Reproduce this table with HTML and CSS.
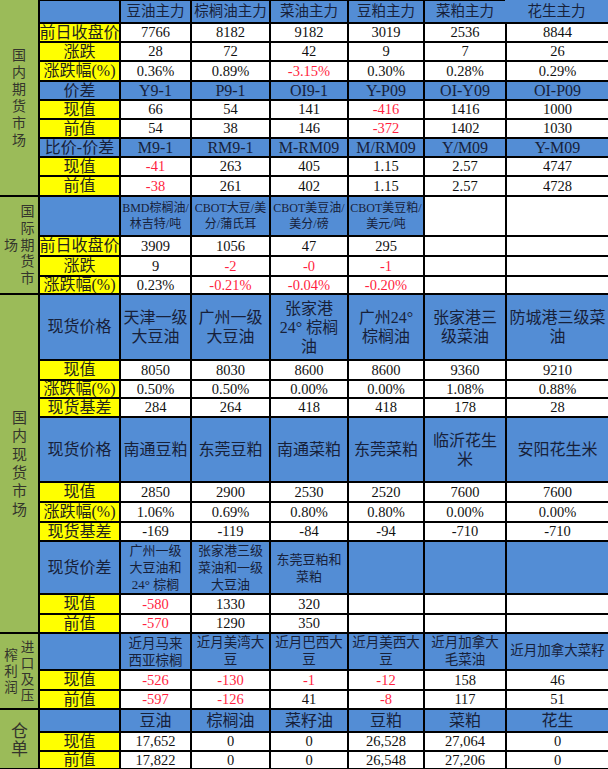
FILE: index.html
```html
<!DOCTYPE html>
<html lang="zh-CN">
<head>
<meta charset="utf-8">
<title>油脂油料市场数据</title>
<link rel="stylesheet" href="styles.css">
</head>
<body>
<div class="sheet">
  <!-- section labels (green column) -->
  <div class="g sec1"><span class="vt vt1">国内期货市场</span></div>
  <div class="g sec2"><span class="vt vt2">国际期货市<br>场</span></div>
  <div class="g sec3"><span class="vt vt3">国内现货市场</span></div>
  <div class="g sec4"><span class="vt vt4">进口及压<br>榨利润</span></div>
  <div class="g sec5"><span class="vt vt5">仓单</span></div>

  <!-- 国内期货市场 -->
  <div class="c b topline"></div>
  <div class="c b h14 topline">豆油主力</div>
  <div class="c b h14 topline">棕榈油主力</div>
  <div class="c b h14 topline">菜油主力</div>
  <div class="c b h14 topline">豆粕主力</div>
  <div class="c b h14 topline">菜粕主力</div>
  <div class="c b h14 joinleft">花生主力</div>

  <div class="c y">前日收盘价</div>
  <div class="c w">7766</div><div class="c w">8182</div><div class="c w">9182</div><div class="c w">3019</div><div class="c w">2536</div><div class="c w">8844</div>

  <div class="c y">涨跌</div>
  <div class="c w">28</div><div class="c w">72</div><div class="c w">42</div><div class="c w">9</div><div class="c w">7</div><div class="c w">26</div>

  <div class="c y">涨跌幅(%)</div>
  <div class="c w">0.36%</div><div class="c w">0.89%</div><div class="c w neg">-3.15%</div><div class="c w">0.30%</div><div class="c w">0.28%</div><div class="c w">0.29%</div>

  <div class="c b lab">价差</div>
  <div class="c b v16">Y9-1</div><div class="c b v16">P9-1</div><div class="c b v16">OI9-1</div><div class="c b v16">Y-P09</div><div class="c b v16">OI-Y09</div><div class="c b v16">OI-P09</div>

  <div class="c y">现值</div>
  <div class="c w">66</div><div class="c w">54</div><div class="c w">141</div><div class="c w neg">-416</div><div class="c w">1416</div><div class="c w">1000</div>

  <div class="c y">前值</div>
  <div class="c w">54</div><div class="c w">38</div><div class="c w">146</div><div class="c w neg">-372</div><div class="c w">1402</div><div class="c w">1030</div>

  <div class="c b lab">比价-价差</div>
  <div class="c b v16">M9-1</div><div class="c b v16">RM9-1</div><div class="c b v16">M-RM09</div><div class="c b v16">M/RM09</div><div class="c b v16">Y/M09</div><div class="c b v16">Y-M09</div>

  <div class="c y">现值</div>
  <div class="c w neg">-41</div><div class="c w">263</div><div class="c w">405</div><div class="c w">1.15</div><div class="c w">2.57</div><div class="c w">4747</div>

  <div class="c y">前值</div>
  <div class="c w neg">-38</div><div class="c w">261</div><div class="c w">402</div><div class="c w">1.15</div><div class="c w">2.57</div><div class="c w">4728</div>

  <!-- 国际期货市场 -->
  <div class="c b"></div>
  <div class="c b s12">BMD棕榈油/<br>林吉特/吨</div>
  <div class="c b s12">CBOT大豆/美<br>分/蒲氏耳</div>
  <div class="c b s12">CBOT美豆油/<br>美分/磅</div>
  <div class="c b s12">CBOT美豆粕/<br>美元/吨</div>
  <div class="c w"></div>
  <div class="c w"></div>

  <div class="c y">前日收盘价</div>
  <div class="c w">3909</div><div class="c w">1056</div><div class="c w">47</div><div class="c w">295</div><div class="c w"></div><div class="c w"></div>

  <div class="c y">涨跌</div>
  <div class="c w">9</div><div class="c w neg">-2</div><div class="c w neg">-0</div><div class="c w neg">-1</div><div class="c w"></div><div class="c w"></div>

  <div class="c y">涨跌幅(%)</div>
  <div class="c w">0.23%</div><div class="c w neg">-0.21%</div><div class="c w neg">-0.04%</div><div class="c w neg">-0.20%</div><div class="c w"></div><div class="c w"></div>

  <!-- 国内现货市场 -->
  <div class="c b lab">现货价格</div>
  <div class="c b h16">天津一级<br>大豆油</div>
  <div class="c b h16">广州一级<br>大豆油</div>
  <div class="c b h16">张家港<br>24° 棕榈<br>油</div>
  <div class="c b h16">广州24°<br>棕榈油</div>
  <div class="c b h16">张家港三<br>级菜油</div>
  <div class="c b h16">防城港三级菜<br>油</div>

  <div class="c y">现值</div>
  <div class="c w">8050</div><div class="c w">8030</div><div class="c w">8600</div><div class="c w">8600</div><div class="c w">9360</div><div class="c w">9210</div>

  <div class="c y">涨跌幅(%)</div>
  <div class="c w">0.50%</div><div class="c w">0.50%</div><div class="c w">0.00%</div><div class="c w">0.00%</div><div class="c w">1.08%</div><div class="c w">0.88%</div>

  <div class="c y">现货基差</div>
  <div class="c w">284</div><div class="c w">264</div><div class="c w">418</div><div class="c w">418</div><div class="c w">178</div><div class="c w">28</div>

  <div class="c b lab">现货价格</div>
  <div class="c b h16">南通豆粕</div>
  <div class="c b h16">东莞豆粕</div>
  <div class="c b h16">南通菜粕</div>
  <div class="c b h16">东莞菜粕</div>
  <div class="c b h16">临沂花生<br>米</div>
  <div class="c b h16">安阳花生米</div>

  <div class="c y">现值</div>
  <div class="c w">2850</div><div class="c w">2900</div><div class="c w">2530</div><div class="c w">2520</div><div class="c w">7600</div><div class="c w">7600</div>

  <div class="c y">涨跌幅(%)</div>
  <div class="c w">1.06%</div><div class="c w">0.69%</div><div class="c w">0.80%</div><div class="c w">0.80%</div><div class="c w">0.00%</div><div class="c w">0.00%</div>

  <div class="c y">现货基差</div>
  <div class="c w">-169</div><div class="c w">-119</div><div class="c w">-84</div><div class="c w">-94</div><div class="c w">-710</div><div class="c w">-710</div>

  <div class="c b lab">现货价差</div>
  <div class="c b s13">广州一级<br>大豆油和<br>24° 棕榈</div>
  <div class="c b s13">张家港三级<br>菜油和一级<br>大豆油</div>
  <div class="c b s13">东莞豆粕和<br>菜粕</div>
  <div class="c b"></div>
  <div class="c b"></div>
  <div class="c b"></div>

  <div class="c y">现值</div>
  <div class="c w neg">-580</div><div class="c w">1330</div><div class="c w">320</div><div class="c w"></div><div class="c w"></div><div class="c w"></div>

  <div class="c y">前值</div>
  <div class="c w neg">-570</div><div class="c w">1290</div><div class="c w">350</div><div class="c w"></div><div class="c w"></div><div class="c w"></div>

  <!-- 进口及压榨利润 -->
  <div class="c b"></div>
  <div class="c b s135 clip">近月马来<br>西亚棕榈</div>
  <div class="c b s135">近月美湾大<br>豆</div>
  <div class="c b s135">近月巴西大<br>豆</div>
  <div class="c b s135">近月美西大<br>豆</div>
  <div class="c b s135">近月加拿大<br>毛菜油</div>
  <div class="c b s135">近月加拿大菜籽</div>

  <div class="c y">现值</div>
  <div class="c w neg">-526</div><div class="c w neg">-130</div><div class="c w neg">-1</div><div class="c w neg">-12</div><div class="c w">158</div><div class="c w">46</div>

  <div class="c y">前值</div>
  <div class="c w neg">-597</div><div class="c w neg">-126</div><div class="c w">41</div><div class="c w neg">-8</div><div class="c w">117</div><div class="c w">51</div>

  <!-- 仓单 -->
  <div class="c b"></div>
  <div class="c b h16">豆油</div>
  <div class="c b h16">棕榈油</div>
  <div class="c b h16">菜籽油</div>
  <div class="c b h16">豆粕</div>
  <div class="c b h16">菜粕</div>
  <div class="c b h16">花生</div>

  <div class="c y">现值</div>
  <div class="c w">17,652</div><div class="c w">0</div><div class="c w">0</div><div class="c w">26,528</div><div class="c w">27,064</div><div class="c w">0</div>

  <div class="c y">前值</div>
  <div class="c w">17,822</div><div class="c w">0</div><div class="c w">0</div><div class="c w">26,548</div><div class="c w">27,206</div><div class="c w">0</div>
</div>
</body>
</html>
```

FILE: styles.css
```css
html, body {
  margin: 0;
  padding: 0;
  background: #ffffff;
}

body {
  font-family: "Liberation Serif", "Noto Sans CJK SC", serif;
  color: #000;
}

.sheet {
  display: grid;
  width: 608px;
  height: 769px;
  box-sizing: border-box;
  padding-bottom: 1px;
  background: #000;
  grid-template-columns: 38px 79px 69px 77px 76px 74px 80px 101px;
  grid-template-rows:
    22px 17px 17px 18px 17px 17px 17px 17px 17px 18px
    38px 18px 18px 16px
    64px 18px 16px 17px 63px 18px 18px 17px 51px 18px 17px
    35px 18px 17px
    21px 17px 16px;
  column-gap: 2px;
  row-gap: 2px;
}

/* section label column */
.g {
  grid-column: 1;
  background: #9bbb59;
  display: flex;
  align-items: center;
  justify-content: center;
  overflow: hidden;
}
.sec1 { grid-row: 1 / span 10; }
.sec2 { grid-row: 11 / span 4; }
.sec3 { grid-row: 15 / span 11; }
.sec4 { grid-row: 26 / span 3; }
.sec5 { grid-row: 29 / span 3; }

.vt {
  writing-mode: vertical-rl;
  text-align: center;
  font-family: "Noto Sans CJK SC", sans-serif;
  color: #34352c;
}
.vt1 { font-size: 14px; letter-spacing: 3px; line-height: 16px; padding-top: 3px; }
.vt2 { font-size: 14px; letter-spacing: 2.7px; line-height: 16.5px; padding-top: 2px; }
.vt3 { font-size: 15px; letter-spacing: 3.3px; line-height: 16px; padding-top: 3px; }
.vt4 { font-size: 13.5px; letter-spacing: 2.5px; line-height: 16.5px; padding-top: 2px; }
.vt5 { font-size: 17px; letter-spacing: 1px; line-height: 18px; padding-top: 1px; }

/* generic cell */
.c {
  display: flex;
  align-items: center;
  justify-content: center;
  text-align: center;
  overflow: hidden;
  min-width: 0;
  min-height: 0;
  white-space: nowrap;
}

/* yellow label */
.y {
  background: #ffff00;
  color: #23241c;
  font-size: 16px;
  line-height: 18px;
}

/* white value */
.w {
  background: #ffffff;
  color: #111;
  font-size: 14.5px;
  line-height: 17px;
}

.neg { color: #ff1f3f; }

/* blue header cells */
.b {
  background: #538dd5;
  color: #17213a;
  font-size: 14px;
  line-height: 17px;
}
.lab { font-size: 16px; line-height: 18px; }
.h14 { font-size: 14.5px; line-height: 20px; }
.v16 { font-size: 16px; line-height: 18px; }
.s12 { font-size: 12px; line-height: 16px; }
.h16 { font-size: 16px; line-height: 19px; }
.s13 { font-size: 13px; line-height: 17px; }
.s135 { font-size: 13.5px; line-height: 16.5px; }
.clip { align-items: flex-start; padding-top: 2px; }

.topline { box-shadow: inset 0 1px 0 #000; }
.joinleft { margin-left: -2px; }
```
